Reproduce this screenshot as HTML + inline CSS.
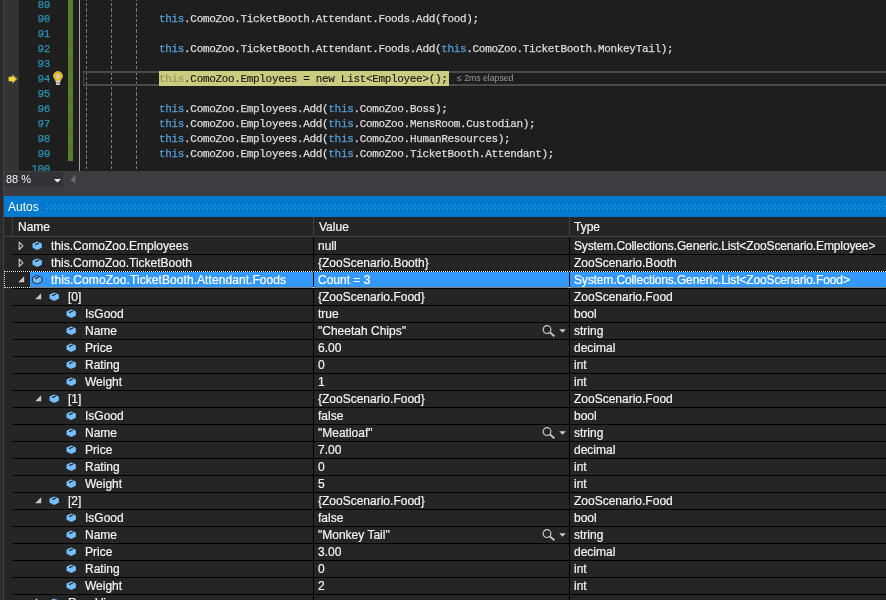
<!DOCTYPE html>
<html><head><meta charset="utf-8"><style>
*{margin:0;padding:0;box-sizing:border-box}
html,body{width:886px;height:600px;overflow:hidden;background:#1e1e1e}
body{position:relative;font-family:"Liberation Sans",sans-serif}
.abs{position:absolute}
#lstrip{position:absolute;left:0;top:0;width:3px;height:600px;background:#2b2b2d}
#lline{position:absolute;left:3px;top:0;width:1px;height:600px;background:#3f3f46}
#editor{position:absolute;left:4px;top:0;width:882px;height:171px;background:#1e1e1e;overflow:hidden}
#glyph{position:absolute;left:0;top:0;width:15px;height:171px;background:#333333}
.ln{position:absolute;margin-top:1px;left:0;width:46px;text-align:right;height:15px;line-height:15px;font-family:"Liberation Mono",monospace;font-size:11px;letter-spacing:-0.33px;color:#2b91af;white-space:pre;-webkit-text-stroke:0.25px currentColor}
.code{position:absolute;margin-top:1px;left:155px;height:15px;line-height:15px;font-family:"Liberation Mono",monospace;font-size:11px;letter-spacing:-0.33px;color:#dcdcdc;white-space:pre;-webkit-text-stroke:0.25px currentColor}
k{color:#569cd6}
#green{position:absolute;left:64px;top:0;width:5px;height:161px;background:#587a32}
#green2{position:absolute;left:64px;top:41px;width:5px;height:106px;background:repeating-linear-gradient(to bottom,#4f6c2e 0 1px,transparent 1px 15px)}
#wline{position:absolute;left:75px;top:0;width:1px;height:171px;background:#a5a5a5}
.guide{position:absolute;top:-2.25px;width:1px;height:173.25px;background:repeating-linear-gradient(to bottom,#7a7a7a 0 3.2px,transparent 3.2px 5.25px)}
#curbox{position:absolute;left:79px;top:71px;width:810px;height:15px;border:1px solid #464646;border-top:2px solid #4a4a4a;border-bottom:2px solid #4a4a4a}
#hl{position:absolute;left:155px;top:71px;width:290px;height:15px;background:#cccc80}
.code.cur{color:#151515;-webkit-text-stroke:0.1px currentColor}
.code.cur k{color:#94945e}
#elapsed{position:absolute;left:453px;top:71px;height:15px;line-height:15px;font-size:8.7px;color:#9a9a9a;white-space:pre}
#zoombar{position:absolute;left:4px;top:171px;width:882px;height:17px;background:#3e3e42}
#zoomcombo{position:absolute;left:1px;top:1px;width:58px;height:15px;background:#333337}
#zoomtxt{position:absolute;left:1px;top:0;line-height:15px;font-size:11px;color:#f1f1f1}
#band{position:absolute;left:4px;top:188px;width:882px;height:8px;background:#3b3b40}
#autos{position:absolute;left:4px;top:196px;width:882px;height:21px;background:#007acc}
#autostxt{position:absolute;left:4px;top:1px;line-height:21px;font-size:12px;color:#ffffff}
#grip{position:absolute;left:43px;top:8px;width:839px;height:5px;
 background-image:radial-gradient(circle at 0.5px 0.5px,#4ca3e4 0.7px,transparent 0.8px),radial-gradient(circle at 2.5px 2.5px,#4ca3e4 0.7px,transparent 0.8px);
 background-size:4px 4px,4px 4px}
#panel{position:absolute;left:4px;top:217px;width:882px;height:383px;background:#252526}
#colhdr{position:absolute;left:4px;top:217px;width:882px;height:20px;background:#252526;border-bottom:1px solid #3f3f46}
.hdrsep{position:absolute;top:217px;width:1px;height:19px;background:#3f3f46}
.hdrtxt{position:absolute;top:218px;line-height:19px;font-size:12px;color:#f4f4f4;-webkit-text-stroke:0.2px currentColor}
.vsep{position:absolute;z-index:2;top:237px;width:1px;height:363px;background:#000}
.hsep{position:absolute;left:13px;width:873px;height:1px;background:#000}
.cell{position:absolute;margin-top:1px;height:17px;line-height:17px;font-size:12px;color:#f4f4f4;white-space:pre;-webkit-text-stroke:0.2px currentColor}
.cell.sel{color:#ffffff}
.ic,.exp,.mag{position:absolute}
.selfill{position:absolute;left:30px;width:856px;height:16px;background:#3399ff}
.focus{position:absolute;z-index:3;left:4px;width:890px;height:17px;border:1px dotted #ffffff;mix-blend-mode:difference}
</style></head><body>
<div id="lstrip"></div><div id="lline"></div>
<div id="editor">
 <div id="glyph"></div>
 <svg class="abs" style="left:3.7px;top:74px" width="14" height="10" viewBox="0 0 14 10"><path d="M4.6 0.7 L9.9 5 L4.6 9.3" fill="none" stroke="#707070" stroke-width="0.9"/><path d="M0.8 3 L4.3 3 L4.3 1.2 L8.6 5 L4.3 8.8 L4.3 7 L0.8 7 Z" fill="#f6d43c" stroke="#f6d43c" stroke-width="0.4" stroke-linejoin="round"/></svg>
 <svg class="abs" style="left:49px;top:70.5px" width="10" height="15" viewBox="0 0 10 15"><path d="M5 1.4 C2.8 1.4 1.3 3.1 1.3 5 C1.3 6.4 2.2 7.3 2.9 8.2 L3.1 9.3 L6.9 9.3 L7.1 8.2 C7.8 7.3 8.7 6.4 8.7 5 C8.7 3.1 7.2 1.4 5 1.4 Z" fill="#b9b9b9" stroke="#b9b9b9" stroke-width="2.4" stroke-linejoin="round"/><path d="M5 1.4 C2.8 1.4 1.3 3.1 1.3 5 C1.3 6.4 2.2 7.3 2.9 8.2 L3.1 9.3 L6.9 9.3 L7.1 8.2 C7.8 7.3 8.7 6.4 8.7 5 C8.7 3.1 7.2 1.4 5 1.4 Z" fill="#d2c48c" stroke="#e8b600" stroke-width="1.6"/><path d="M3.9 4.2 L5 5.6 L6.1 4.2 M5 5.6 V8.4" stroke="#eee0b0" stroke-width="0.8" fill="none"/><rect x="2.9" y="9.4" width="4.2" height="4.6" rx="1" fill="#dcdcdc"/><rect x="2.9" y="10.9" width="4.2" height="0.7" fill="#8c8c8c"/><rect x="2.9" y="12.3" width="4.2" height="0.7" fill="#8c8c8c"/></svg>
 <div id="green"></div><div id="green2"></div>
 <div id="wline"></div>
 <div class="guide" style="left:82px"></div>
 <div class="guide" style="left:107px"></div>
 <div class="guide" style="left:132px"></div>
 <div id="curbox"></div>
 <div id="hl"></div>
<div class="ln" style="top:-3px">89</div>
<div class="ln" style="top:11px">90</div>
<div class="code" style="top:11px"><k>this</k>.ComoZoo.TicketBooth.Attendant.Foods.Add(food);</div>
<div class="ln" style="top:26px">91</div>
<div class="ln" style="top:41px">92</div>
<div class="code" style="top:41px"><k>this</k>.ComoZoo.TicketBooth.Attendant.Foods.Add(<k>this</k>.ComoZoo.TicketBooth.MonkeyTail);</div>
<div class="ln" style="top:56px">93</div>
<div class="ln" style="top:71px">94</div>
<div class="code cur" style="top:71px"><k>this</k>.ComoZoo.Employees = new List&lt;Employee&gt;();</div>
<div class="ln" style="top:86px">95</div>
<div class="ln" style="top:101px">96</div>
<div class="code" style="top:101px"><k>this</k>.ComoZoo.Employees.Add(<k>this</k>.ComoZoo.Boss);</div>
<div class="ln" style="top:116px">97</div>
<div class="code" style="top:116px"><k>this</k>.ComoZoo.Employees.Add(<k>this</k>.ComoZoo.MensRoom.Custodian);</div>
<div class="ln" style="top:131px">98</div>
<div class="code" style="top:131px"><k>this</k>.ComoZoo.Employees.Add(<k>this</k>.ComoZoo.HumanResources);</div>
<div class="ln" style="top:146px">99</div>
<div class="code" style="top:146px"><k>this</k>.ComoZoo.Employees.Add(<k>this</k>.ComoZoo.TicketBooth.Attendant);</div>
<div class="ln" style="top:161px">100</div>
 <div class="abs" style="left:313px;top:83.5px;width:2px;height:1.5px;background:#a0a0b8"></div><div class="abs" style="left:316.5px;top:83.5px;width:2px;height:1.5px;background:#a0a0b8"></div><div class="abs" style="left:320px;top:83.5px;width:2px;height:1.5px;background:#a0a0b8"></div>
 <div id="elapsed">≤ 2ms elapsed</div>
</div>
<div id="zoombar"><div id="zoomcombo"><div id="zoomtxt">88 %</div>
 <svg class="abs" style="left:49px;top:7px" width="7" height="4" viewBox="0 0 7 4"><path d="M0 0 L7 0 L3.5 3.6 Z" fill="#f1f1f1"/></svg></div>
 <svg class="abs" style="left:66px;top:4px" width="6" height="9" viewBox="0 0 6 9"><path d="M5.5 0 L5.5 9 L0.5 4.5 Z" fill="#686868"/></svg>
</div>
<div id="band"></div>
<div id="autos"><div id="autostxt">Autos</div><div id="grip"></div></div>
<div id="panel"></div>
<div id="colhdr"></div>
<div class="hdrsep" style="left:12px"></div>
<div class="hdrsep" style="left:313px"></div>
<div class="hdrsep" style="left:569px"></div>
<div class="hdrtxt" style="left:18px">Name</div>
<div class="hdrtxt" style="left:319px">Value</div>
<div class="hdrtxt" style="left:574px">Type</div>
<div class="vsep" style="left:313px"></div>
<div class="vsep" style="left:569px"></div>
<svg class="exp" style="left:18px;top:241px" width="6" height="10" viewBox="0 0 6 10"><path d="M1.2 1.1 L4.9 4.8 L1.2 8.5 Z" fill="none" stroke="#c8c8c8" stroke-width="1.1" stroke-linejoin="round"/></svg>
<svg class="ic" style="left:32px;top:241px" width="12" height="11" viewBox="-0.5 -0.5 12 11"><path d="M0 2.6 Q0 2.1 0.6 1.8 L4.1 0.2 Q4.7 -0.1 5.3 0.2 L8.8 1.8 Q9.4 2.1 9.4 2.6 L9.4 5.8 Q9.4 6.3 8.8 6.6 L5.3 8.2 Q4.7 8.5 4.1 8.2 L0.6 6.6 Q0 6.3 0 5.8 Z" fill="#75bdfc"/><path d="M3.1 3.0 L5.9 1.7" stroke="#1a1a1a" stroke-width="1.2" stroke-linecap="round"/></svg>
<div class="cell" style="left:51px;top:237px">this.ComoZoo.Employees</div>
<div class="cell" style="left:318px;top:237px">null</div>
<div class="cell" style="left:574px;top:237px;letter-spacing:-0.13px">System.Collections.Generic.List&lt;ZooScenario.Employee&gt;</div>
<div class="hsep" style="top:254px"></div>
<svg class="exp" style="left:18px;top:258px" width="6" height="10" viewBox="0 0 6 10"><path d="M1.2 1.1 L4.9 4.8 L1.2 8.5 Z" fill="none" stroke="#c8c8c8" stroke-width="1.1" stroke-linejoin="round"/></svg>
<svg class="ic" style="left:32px;top:258px" width="12" height="11" viewBox="-0.5 -0.5 12 11"><path d="M0 2.6 Q0 2.1 0.6 1.8 L4.1 0.2 Q4.7 -0.1 5.3 0.2 L8.8 1.8 Q9.4 2.1 9.4 2.6 L9.4 5.8 Q9.4 6.3 8.8 6.6 L5.3 8.2 Q4.7 8.5 4.1 8.2 L0.6 6.6 Q0 6.3 0 5.8 Z" fill="#75bdfc"/><path d="M3.1 3.0 L5.9 1.7" stroke="#1a1a1a" stroke-width="1.2" stroke-linecap="round"/></svg>
<div class="cell" style="left:51px;top:254px">this.ComoZoo.TicketBooth</div>
<div class="cell" style="left:318px;top:254px">{ZooScenario.Booth}</div>
<div class="cell" style="left:574px;top:254px">ZooScenario.Booth</div>
<div class="hsep" style="top:271px"></div>
<div class="selfill" style="top:272px"></div>
<div class="focus" style="top:271px"></div>
<svg class="exp" style="left:18px;top:276px" width="7" height="7" viewBox="0 0 7 7"><path d="M6.2 0.2 L6.2 6.2 L0.2 6.2 Z" fill="#c8c8c8"/></svg>
<svg class="ic" style="left:32px;top:275px" width="12" height="11" viewBox="-0.5 -0.5 12 11"><path d="M0 2.6 Q0 2.1 0.6 1.8 L4.1 0.2 Q4.7 -0.1 5.3 0.2 L8.8 1.8 Q9.4 2.1 9.4 2.6 L9.4 5.8 Q9.4 6.3 8.8 6.6 L5.3 8.2 Q4.7 8.5 4.1 8.2 L0.6 6.6 Q0 6.3 0 5.8 Z" fill="#75bdfc" stroke="#1b1b1b" stroke-width="0.9"/><path d="M3.1 3.0 L5.9 1.7" stroke="#1a1a1a" stroke-width="1.2" stroke-linecap="round"/></svg>
<div class="cell sel" style="left:51px;top:271px;letter-spacing:0.07px">this.ComoZoo.TicketBooth.Attendant.Foods</div>
<div class="cell sel" style="left:318px;top:271px">Count = 3</div>
<div class="cell sel" style="left:574px;top:271px;letter-spacing:-0.13px">System.Collections.Generic.List&lt;ZooScenario.Food&gt;</div>
<div class="hsep" style="top:288px"></div>
<svg class="exp" style="left:35px;top:293px" width="7" height="7" viewBox="0 0 7 7"><path d="M6.2 0.2 L6.2 6.2 L0.2 6.2 Z" fill="#c8c8c8"/></svg>
<svg class="ic" style="left:49px;top:292px" width="12" height="11" viewBox="-0.5 -0.5 12 11"><path d="M0 2.6 Q0 2.1 0.6 1.8 L4.1 0.2 Q4.7 -0.1 5.3 0.2 L8.8 1.8 Q9.4 2.1 9.4 2.6 L9.4 5.8 Q9.4 6.3 8.8 6.6 L5.3 8.2 Q4.7 8.5 4.1 8.2 L0.6 6.6 Q0 6.3 0 5.8 Z" fill="#75bdfc"/><path d="M3.1 3.0 L5.9 1.7" stroke="#1a1a1a" stroke-width="1.2" stroke-linecap="round"/></svg>
<div class="cell" style="left:68px;top:288px">[0]</div>
<div class="cell" style="left:318px;top:288px">{ZooScenario.Food}</div>
<div class="cell" style="left:574px;top:288px">ZooScenario.Food</div>
<div class="hsep" style="top:305px"></div>
<svg class="ic" style="left:66px;top:309px" width="12" height="11" viewBox="-0.5 -0.5 12 11"><path d="M0 2.6 Q0 2.1 0.6 1.8 L4.1 0.2 Q4.7 -0.1 5.3 0.2 L8.8 1.8 Q9.4 2.1 9.4 2.6 L9.4 5.8 Q9.4 6.3 8.8 6.6 L5.3 8.2 Q4.7 8.5 4.1 8.2 L0.6 6.6 Q0 6.3 0 5.8 Z" fill="#75bdfc"/><path d="M3.1 3.0 L5.9 1.7" stroke="#1a1a1a" stroke-width="1.2" stroke-linecap="round"/></svg>
<div class="cell" style="left:85px;top:305px">IsGood</div>
<div class="cell" style="left:318px;top:305px">true</div>
<div class="cell" style="left:574px;top:305px">bool</div>
<div class="hsep" style="top:322px"></div>
<svg class="ic" style="left:66px;top:326px" width="12" height="11" viewBox="-0.5 -0.5 12 11"><path d="M0 2.6 Q0 2.1 0.6 1.8 L4.1 0.2 Q4.7 -0.1 5.3 0.2 L8.8 1.8 Q9.4 2.1 9.4 2.6 L9.4 5.8 Q9.4 6.3 8.8 6.6 L5.3 8.2 Q4.7 8.5 4.1 8.2 L0.6 6.6 Q0 6.3 0 5.8 Z" fill="#75bdfc"/><path d="M3.1 3.0 L5.9 1.7" stroke="#1a1a1a" stroke-width="1.2" stroke-linecap="round"/></svg>
<div class="cell" style="left:85px;top:322px">Name</div>
<div class="cell" style="left:318px;top:322px">"Cheetah Chips"</div>
<div class="cell" style="left:574px;top:322px">string</div>
<svg class="mag" style="left:541px;top:325px" width="26" height="12" viewBox="0 0 26 12"><circle cx="6" cy="4.6" r="3.9" fill="none" stroke="#c8c8c8" stroke-width="1.2"/><path d="M8.9 7.4 L13.4 11.3" stroke="#c8c8c8" stroke-width="1.9"/><path d="M18.2 4.2 L24.8 4.2 L21.5 7.8 Z" fill="#c8c8c8"/></svg>
<div class="hsep" style="top:339px"></div>
<svg class="ic" style="left:66px;top:343px" width="12" height="11" viewBox="-0.5 -0.5 12 11"><path d="M0 2.6 Q0 2.1 0.6 1.8 L4.1 0.2 Q4.7 -0.1 5.3 0.2 L8.8 1.8 Q9.4 2.1 9.4 2.6 L9.4 5.8 Q9.4 6.3 8.8 6.6 L5.3 8.2 Q4.7 8.5 4.1 8.2 L0.6 6.6 Q0 6.3 0 5.8 Z" fill="#75bdfc"/><path d="M3.1 3.0 L5.9 1.7" stroke="#1a1a1a" stroke-width="1.2" stroke-linecap="round"/></svg>
<div class="cell" style="left:85px;top:339px">Price</div>
<div class="cell" style="left:318px;top:339px">6.00</div>
<div class="cell" style="left:574px;top:339px">decimal</div>
<div class="hsep" style="top:356px"></div>
<svg class="ic" style="left:66px;top:360px" width="12" height="11" viewBox="-0.5 -0.5 12 11"><path d="M0 2.6 Q0 2.1 0.6 1.8 L4.1 0.2 Q4.7 -0.1 5.3 0.2 L8.8 1.8 Q9.4 2.1 9.4 2.6 L9.4 5.8 Q9.4 6.3 8.8 6.6 L5.3 8.2 Q4.7 8.5 4.1 8.2 L0.6 6.6 Q0 6.3 0 5.8 Z" fill="#75bdfc"/><path d="M3.1 3.0 L5.9 1.7" stroke="#1a1a1a" stroke-width="1.2" stroke-linecap="round"/></svg>
<div class="cell" style="left:85px;top:356px">Rating</div>
<div class="cell" style="left:318px;top:356px">0</div>
<div class="cell" style="left:574px;top:356px">int</div>
<div class="hsep" style="top:373px"></div>
<svg class="ic" style="left:66px;top:377px" width="12" height="11" viewBox="-0.5 -0.5 12 11"><path d="M0 2.6 Q0 2.1 0.6 1.8 L4.1 0.2 Q4.7 -0.1 5.3 0.2 L8.8 1.8 Q9.4 2.1 9.4 2.6 L9.4 5.8 Q9.4 6.3 8.8 6.6 L5.3 8.2 Q4.7 8.5 4.1 8.2 L0.6 6.6 Q0 6.3 0 5.8 Z" fill="#75bdfc"/><path d="M3.1 3.0 L5.9 1.7" stroke="#1a1a1a" stroke-width="1.2" stroke-linecap="round"/></svg>
<div class="cell" style="left:85px;top:373px">Weight</div>
<div class="cell" style="left:318px;top:373px">1</div>
<div class="cell" style="left:574px;top:373px">int</div>
<div class="hsep" style="top:390px"></div>
<svg class="exp" style="left:35px;top:395px" width="7" height="7" viewBox="0 0 7 7"><path d="M6.2 0.2 L6.2 6.2 L0.2 6.2 Z" fill="#c8c8c8"/></svg>
<svg class="ic" style="left:49px;top:394px" width="12" height="11" viewBox="-0.5 -0.5 12 11"><path d="M0 2.6 Q0 2.1 0.6 1.8 L4.1 0.2 Q4.7 -0.1 5.3 0.2 L8.8 1.8 Q9.4 2.1 9.4 2.6 L9.4 5.8 Q9.4 6.3 8.8 6.6 L5.3 8.2 Q4.7 8.5 4.1 8.2 L0.6 6.6 Q0 6.3 0 5.8 Z" fill="#75bdfc"/><path d="M3.1 3.0 L5.9 1.7" stroke="#1a1a1a" stroke-width="1.2" stroke-linecap="round"/></svg>
<div class="cell" style="left:68px;top:390px">[1]</div>
<div class="cell" style="left:318px;top:390px">{ZooScenario.Food}</div>
<div class="cell" style="left:574px;top:390px">ZooScenario.Food</div>
<div class="hsep" style="top:407px"></div>
<svg class="ic" style="left:66px;top:411px" width="12" height="11" viewBox="-0.5 -0.5 12 11"><path d="M0 2.6 Q0 2.1 0.6 1.8 L4.1 0.2 Q4.7 -0.1 5.3 0.2 L8.8 1.8 Q9.4 2.1 9.4 2.6 L9.4 5.8 Q9.4 6.3 8.8 6.6 L5.3 8.2 Q4.7 8.5 4.1 8.2 L0.6 6.6 Q0 6.3 0 5.8 Z" fill="#75bdfc"/><path d="M3.1 3.0 L5.9 1.7" stroke="#1a1a1a" stroke-width="1.2" stroke-linecap="round"/></svg>
<div class="cell" style="left:85px;top:407px">IsGood</div>
<div class="cell" style="left:318px;top:407px">false</div>
<div class="cell" style="left:574px;top:407px">bool</div>
<div class="hsep" style="top:424px"></div>
<svg class="ic" style="left:66px;top:428px" width="12" height="11" viewBox="-0.5 -0.5 12 11"><path d="M0 2.6 Q0 2.1 0.6 1.8 L4.1 0.2 Q4.7 -0.1 5.3 0.2 L8.8 1.8 Q9.4 2.1 9.4 2.6 L9.4 5.8 Q9.4 6.3 8.8 6.6 L5.3 8.2 Q4.7 8.5 4.1 8.2 L0.6 6.6 Q0 6.3 0 5.8 Z" fill="#75bdfc"/><path d="M3.1 3.0 L5.9 1.7" stroke="#1a1a1a" stroke-width="1.2" stroke-linecap="round"/></svg>
<div class="cell" style="left:85px;top:424px">Name</div>
<div class="cell" style="left:318px;top:424px">"Meatloaf"</div>
<div class="cell" style="left:574px;top:424px">string</div>
<svg class="mag" style="left:541px;top:427px" width="26" height="12" viewBox="0 0 26 12"><circle cx="6" cy="4.6" r="3.9" fill="none" stroke="#c8c8c8" stroke-width="1.2"/><path d="M8.9 7.4 L13.4 11.3" stroke="#c8c8c8" stroke-width="1.9"/><path d="M18.2 4.2 L24.8 4.2 L21.5 7.8 Z" fill="#c8c8c8"/></svg>
<div class="hsep" style="top:441px"></div>
<svg class="ic" style="left:66px;top:445px" width="12" height="11" viewBox="-0.5 -0.5 12 11"><path d="M0 2.6 Q0 2.1 0.6 1.8 L4.1 0.2 Q4.7 -0.1 5.3 0.2 L8.8 1.8 Q9.4 2.1 9.4 2.6 L9.4 5.8 Q9.4 6.3 8.8 6.6 L5.3 8.2 Q4.7 8.5 4.1 8.2 L0.6 6.6 Q0 6.3 0 5.8 Z" fill="#75bdfc"/><path d="M3.1 3.0 L5.9 1.7" stroke="#1a1a1a" stroke-width="1.2" stroke-linecap="round"/></svg>
<div class="cell" style="left:85px;top:441px">Price</div>
<div class="cell" style="left:318px;top:441px">7.00</div>
<div class="cell" style="left:574px;top:441px">decimal</div>
<div class="hsep" style="top:458px"></div>
<svg class="ic" style="left:66px;top:462px" width="12" height="11" viewBox="-0.5 -0.5 12 11"><path d="M0 2.6 Q0 2.1 0.6 1.8 L4.1 0.2 Q4.7 -0.1 5.3 0.2 L8.8 1.8 Q9.4 2.1 9.4 2.6 L9.4 5.8 Q9.4 6.3 8.8 6.6 L5.3 8.2 Q4.7 8.5 4.1 8.2 L0.6 6.6 Q0 6.3 0 5.8 Z" fill="#75bdfc"/><path d="M3.1 3.0 L5.9 1.7" stroke="#1a1a1a" stroke-width="1.2" stroke-linecap="round"/></svg>
<div class="cell" style="left:85px;top:458px">Rating</div>
<div class="cell" style="left:318px;top:458px">0</div>
<div class="cell" style="left:574px;top:458px">int</div>
<div class="hsep" style="top:475px"></div>
<svg class="ic" style="left:66px;top:479px" width="12" height="11" viewBox="-0.5 -0.5 12 11"><path d="M0 2.6 Q0 2.1 0.6 1.8 L4.1 0.2 Q4.7 -0.1 5.3 0.2 L8.8 1.8 Q9.4 2.1 9.4 2.6 L9.4 5.8 Q9.4 6.3 8.8 6.6 L5.3 8.2 Q4.7 8.5 4.1 8.2 L0.6 6.6 Q0 6.3 0 5.8 Z" fill="#75bdfc"/><path d="M3.1 3.0 L5.9 1.7" stroke="#1a1a1a" stroke-width="1.2" stroke-linecap="round"/></svg>
<div class="cell" style="left:85px;top:475px">Weight</div>
<div class="cell" style="left:318px;top:475px">5</div>
<div class="cell" style="left:574px;top:475px">int</div>
<div class="hsep" style="top:492px"></div>
<svg class="exp" style="left:35px;top:497px" width="7" height="7" viewBox="0 0 7 7"><path d="M6.2 0.2 L6.2 6.2 L0.2 6.2 Z" fill="#c8c8c8"/></svg>
<svg class="ic" style="left:49px;top:496px" width="12" height="11" viewBox="-0.5 -0.5 12 11"><path d="M0 2.6 Q0 2.1 0.6 1.8 L4.1 0.2 Q4.7 -0.1 5.3 0.2 L8.8 1.8 Q9.4 2.1 9.4 2.6 L9.4 5.8 Q9.4 6.3 8.8 6.6 L5.3 8.2 Q4.7 8.5 4.1 8.2 L0.6 6.6 Q0 6.3 0 5.8 Z" fill="#75bdfc"/><path d="M3.1 3.0 L5.9 1.7" stroke="#1a1a1a" stroke-width="1.2" stroke-linecap="round"/></svg>
<div class="cell" style="left:68px;top:492px">[2]</div>
<div class="cell" style="left:318px;top:492px">{ZooScenario.Food}</div>
<div class="cell" style="left:574px;top:492px">ZooScenario.Food</div>
<div class="hsep" style="top:509px"></div>
<svg class="ic" style="left:66px;top:513px" width="12" height="11" viewBox="-0.5 -0.5 12 11"><path d="M0 2.6 Q0 2.1 0.6 1.8 L4.1 0.2 Q4.7 -0.1 5.3 0.2 L8.8 1.8 Q9.4 2.1 9.4 2.6 L9.4 5.8 Q9.4 6.3 8.8 6.6 L5.3 8.2 Q4.7 8.5 4.1 8.2 L0.6 6.6 Q0 6.3 0 5.8 Z" fill="#75bdfc"/><path d="M3.1 3.0 L5.9 1.7" stroke="#1a1a1a" stroke-width="1.2" stroke-linecap="round"/></svg>
<div class="cell" style="left:85px;top:509px">IsGood</div>
<div class="cell" style="left:318px;top:509px">false</div>
<div class="cell" style="left:574px;top:509px">bool</div>
<div class="hsep" style="top:526px"></div>
<svg class="ic" style="left:66px;top:530px" width="12" height="11" viewBox="-0.5 -0.5 12 11"><path d="M0 2.6 Q0 2.1 0.6 1.8 L4.1 0.2 Q4.7 -0.1 5.3 0.2 L8.8 1.8 Q9.4 2.1 9.4 2.6 L9.4 5.8 Q9.4 6.3 8.8 6.6 L5.3 8.2 Q4.7 8.5 4.1 8.2 L0.6 6.6 Q0 6.3 0 5.8 Z" fill="#75bdfc"/><path d="M3.1 3.0 L5.9 1.7" stroke="#1a1a1a" stroke-width="1.2" stroke-linecap="round"/></svg>
<div class="cell" style="left:85px;top:526px">Name</div>
<div class="cell" style="left:318px;top:526px">"Monkey Tail"</div>
<div class="cell" style="left:574px;top:526px">string</div>
<svg class="mag" style="left:541px;top:529px" width="26" height="12" viewBox="0 0 26 12"><circle cx="6" cy="4.6" r="3.9" fill="none" stroke="#c8c8c8" stroke-width="1.2"/><path d="M8.9 7.4 L13.4 11.3" stroke="#c8c8c8" stroke-width="1.9"/><path d="M18.2 4.2 L24.8 4.2 L21.5 7.8 Z" fill="#c8c8c8"/></svg>
<div class="hsep" style="top:543px"></div>
<svg class="ic" style="left:66px;top:547px" width="12" height="11" viewBox="-0.5 -0.5 12 11"><path d="M0 2.6 Q0 2.1 0.6 1.8 L4.1 0.2 Q4.7 -0.1 5.3 0.2 L8.8 1.8 Q9.4 2.1 9.4 2.6 L9.4 5.8 Q9.4 6.3 8.8 6.6 L5.3 8.2 Q4.7 8.5 4.1 8.2 L0.6 6.6 Q0 6.3 0 5.8 Z" fill="#75bdfc"/><path d="M3.1 3.0 L5.9 1.7" stroke="#1a1a1a" stroke-width="1.2" stroke-linecap="round"/></svg>
<div class="cell" style="left:85px;top:543px">Price</div>
<div class="cell" style="left:318px;top:543px">3.00</div>
<div class="cell" style="left:574px;top:543px">decimal</div>
<div class="hsep" style="top:560px"></div>
<svg class="ic" style="left:66px;top:564px" width="12" height="11" viewBox="-0.5 -0.5 12 11"><path d="M0 2.6 Q0 2.1 0.6 1.8 L4.1 0.2 Q4.7 -0.1 5.3 0.2 L8.8 1.8 Q9.4 2.1 9.4 2.6 L9.4 5.8 Q9.4 6.3 8.8 6.6 L5.3 8.2 Q4.7 8.5 4.1 8.2 L0.6 6.6 Q0 6.3 0 5.8 Z" fill="#75bdfc"/><path d="M3.1 3.0 L5.9 1.7" stroke="#1a1a1a" stroke-width="1.2" stroke-linecap="round"/></svg>
<div class="cell" style="left:85px;top:560px">Rating</div>
<div class="cell" style="left:318px;top:560px">0</div>
<div class="cell" style="left:574px;top:560px">int</div>
<div class="hsep" style="top:577px"></div>
<svg class="ic" style="left:66px;top:581px" width="12" height="11" viewBox="-0.5 -0.5 12 11"><path d="M0 2.6 Q0 2.1 0.6 1.8 L4.1 0.2 Q4.7 -0.1 5.3 0.2 L8.8 1.8 Q9.4 2.1 9.4 2.6 L9.4 5.8 Q9.4 6.3 8.8 6.6 L5.3 8.2 Q4.7 8.5 4.1 8.2 L0.6 6.6 Q0 6.3 0 5.8 Z" fill="#75bdfc"/><path d="M3.1 3.0 L5.9 1.7" stroke="#1a1a1a" stroke-width="1.2" stroke-linecap="round"/></svg>
<div class="cell" style="left:85px;top:577px">Weight</div>
<div class="cell" style="left:318px;top:577px">2</div>
<div class="cell" style="left:574px;top:577px">int</div>
<div class="hsep" style="top:594px"></div>
<svg class="exp" style="left:35px;top:598px" width="6" height="10" viewBox="0 0 6 10"><path d="M1.2 1.1 L4.9 4.8 L1.2 8.5 Z" fill="none" stroke="#c8c8c8" stroke-width="1.1" stroke-linejoin="round"/></svg>
<svg class="ic" style="left:49px;top:598px" width="12" height="11" viewBox="-0.5 -0.5 12 11"><path d="M0 2.6 Q0 2.1 0.6 1.8 L4.1 0.2 Q4.7 -0.1 5.3 0.2 L8.8 1.8 Q9.4 2.1 9.4 2.6 L9.4 5.8 Q9.4 6.3 8.8 6.6 L5.3 8.2 Q4.7 8.5 4.1 8.2 L0.6 6.6 Q0 6.3 0 5.8 Z" fill="#75bdfc"/><path d="M3.1 3.0 L5.9 1.7" stroke="#1a1a1a" stroke-width="1.2" stroke-linecap="round"/></svg>
<div class="cell" style="left:68px;top:594px">Raw View</div>
<div class="cell" style="left:318px;top:594px"></div>
<div class="cell" style="left:574px;top:594px"></div>
<div class="hsep" style="top:611px"></div>
</body></html>
